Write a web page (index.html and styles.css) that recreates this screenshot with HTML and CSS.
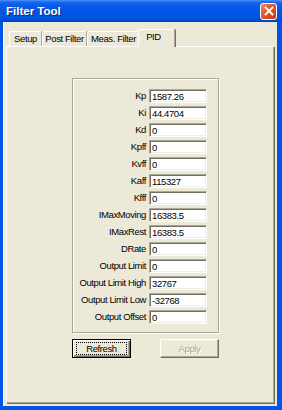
FILE: index.html
```html
<!DOCTYPE html>
<html lang="en">
<head>
    <meta charset="UTF-8">
    <meta name="viewport" content="width=device-width, initial-scale=1.0">
    <title>Filter Tool</title>
    <link rel="stylesheet" href="styles.css">
</head>
<body>
    <div class="window">
        <div class="titlebar">
            <span class="title">Filter Tool</span>
            <div class="close">
                <svg width="10" height="10" viewBox="0 0 10 10">
                    <path d="M1.5 1.5 L8.5 8.5 M8.5 1.5 L1.5 8.5" stroke="#fff" stroke-width="1.8" stroke-linecap="square"/>
                </svg>
            </div>
        </div>

        <div class="client">
            <div class="tabs">
                <div class="tab tab-setup">Setup</div>
                <div class="tab tab-post">Post Filter</div>
                <div class="tab tab-meas">Meas. Filter</div>
                <div class="tab tab-pid active">PID</div>
            </div>

            <div class="panel">
                <div class="group">
                    <label class="row"><span>Kp</span><input class="field" value="1587.26"></label>
                    <label class="row"><span>Ki</span><input class="field" value="44.4704"></label>
                    <label class="row"><span>Kd</span><input class="field" value="0"></label>
                    <label class="row"><span>Kpff</span><input class="field" value="0"></label>
                    <label class="row"><span>Kvff</span><input class="field" value="0"></label>
                    <label class="row"><span>Kaff</span><input class="field" value="115327"></label>
                    <label class="row"><span>Kfff</span><input class="field" value="0"></label>
                    <label class="row"><span>IMaxMoving</span><input class="field" value="16383.5"></label>
                    <label class="row"><span>IMaxRest</span><input class="field" value="16383.5"></label>
                    <label class="row"><span>DRate</span><input class="field" value="0"></label>
                    <label class="row"><span>Output Limit</span><input class="field" value="0"></label>
                    <label class="row"><span>Output Limit High</span><input class="field" value="32767"></label>
                    <label class="row"><span>Output Limit Low</span><input class="field" value="-32768"></label>
                    <label class="row"><span>Output Offset</span><input class="field" value="0"></label>
                </div>

                <div class="buttons">
                    <button class="btn btn-default"><span class="focus">Refresh</span></button>
                    <button class="btn" disabled>Apply</button>
                </div>
            </div>
        </div>
    </div>
</body>
</html>
```

FILE: styles.css
```css
body {
    margin: 0;
    background: #ece9d8;
    font-family: 'Liberation Sans', Arial, sans-serif;
    font-size: 9.5px;
    letter-spacing: -0.4px;
    color: #000;
}
.window {
    width: 282px;
    height: 410px;
    box-sizing: border-box;
    display: flex;
    flex-direction: column;
    background: #0055e5;
}
.titlebar {
    height: 22px;
    flex: none;
    display: flex;
    align-items: center;
    justify-content: space-between;
    padding: 0 5px 0 6px;
    background: linear-gradient(to bottom, #4a96fa 0, #1a68ee 2px, #0a5de8 5px, #0056e5 50%, #0052e0 85%, #0040c4 100%);
}
.title {
    font-weight: bold;
    font-size: 11.5px;
    letter-spacing: 0;
    color: #fff;
    text-shadow: 1px 1px 0 #0a2a8c;
}
.close {
    width: 15px;
    height: 15px;
    border: 1px solid #fff;
    border-radius: 3px;
    background: linear-gradient(135deg, #f08c6c 0%, #e25a30 40%, #c73e16 100%);
    display: flex;
    align-items: center;
    justify-content: center;
}
.client {
    flex: 1;
    margin: 0 5px 4px 3px;
    background: #ece9d8;
    box-shadow: inset 1px 0 #fbfaf4;
    padding: 7px 2px 2px 3px;
    display: flex;
    flex-direction: column;
}
.tabs {
    display: flex;
    align-items: flex-end;
    height: 17px;
    padding-left: 3px;
    position: relative;
    z-index: 1;
}
.tab {
    height: 15px;
    line-height: 14px;
    box-sizing: border-box;
    text-align: center;
    white-space: nowrap;
    border-top: 1px solid #fff;
    border-left: 1px solid #fff;
    border-right: 1px solid #aca899;
    box-shadow: 1px 0 #716f64;
    border-radius: 2px 2px 0 0;
}
.tab-setup { width: 33px; }
.tab-post { width: 45px; }
.tab-meas { width: 53px; }
.tab-pid { width: 37px; }
.tab.active {
    height: 18px;
    margin: 0 -2px -1px -2px;
    padding-right: 6px;
    background: #ece9d8;
    line-height: 13px;
}
.panel {
    flex: 1;
    border-top: 1px solid #fff;
    border-left: 1px solid #fff;
    border-right: 1px solid #aca899;
    border-bottom: 1px solid #aca899;
    box-shadow: 1px 1px #716f64;
    margin-right: 1px;
    margin-bottom: 1px;
    padding: 31px 0 0 65px;
}
.group {
    width: 145px;
    height: 243px;
    border: 1px solid #aca899;
    box-shadow: inset 1px 1px #fff, 1px 1px #fff;
    padding-top: 10px;
}
.row {
    display: grid;
    grid-template-columns: 73px 58px;
    column-gap: 3px;
    height: 17px;
    align-items: start;
}
.row span {
    text-align: right;
    line-height: 14px;
    white-space: nowrap;
}
.field {
    width: 58px;
    height: 14px;
    box-sizing: border-box;
    margin: 0;
    padding: 0 0 0 2px;
    font: inherit;
    letter-spacing: inherit;
    color: #000;
    background: #fff;
    border: 1px solid;
    border-color: #aca899 #fff #fff #aca899;
    box-shadow: inset 1px 1px #716f64, inset -1px -1px #f1efe2;
    outline: none;
}
.buttons {
    width: 147px;
    display: flex;
    justify-content: space-between;
    margin-top: 6px;
}
.btn {
    width: 59px;
    height: 19px;
    box-sizing: border-box;
    margin: 0;
    padding: 0;
    font: inherit;
    letter-spacing: inherit;
    color: #000;
    background: #ece9d8;
    border: 1px solid;
    border-color: #fff #716f64 #716f64 #fff;
    box-shadow: inset -1px -1px #aca899, inset 1px 1px #f1efe2;
}
.btn-default {
    border: 1px solid #000;
    box-shadow: inset 1px 1px #fff, inset -1px -1px #716f64, inset -2px -2px #aca899;
    padding: 2px 3px;
}
.focus {
    display: block;
    height: 100%;
    box-sizing: border-box;
    border: 1px dotted #000;
    line-height: 11px;
}
.btn:disabled {
    color: #aca899;
    text-shadow: 1px 1px #fff;
}
```
